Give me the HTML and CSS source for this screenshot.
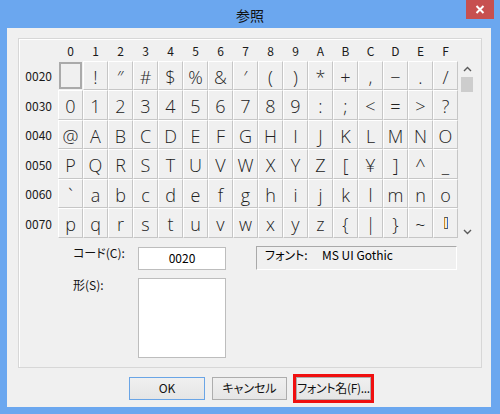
FILE: index.html
```html
<!DOCTYPE html>
<html lang="ja">
<head>
<meta charset="utf-8">
<title>参照</title>
<link rel="stylesheet" href="styles.css">
</head>
<body>
<div class="window">
  <div class="titlebar">
    <div class="spacer"></div>
    <div class="title">参照</div>
    <div class="close">
      <svg width="10" height="9" viewBox="0 0 10 9"><path d="M1.5 1 L8.5 8 M8.5 1 L1.5 8" stroke="#fff" stroke-width="2" fill="none"/></svg>
    </div>
  </div>
  <div class="client">
    <div class="group">
      <div class="charmap">
        <div class="corner"></div>
        <div class="colhead">0</div><div class="colhead">1</div><div class="colhead">2</div><div class="colhead">3</div>
        <div class="colhead">4</div><div class="colhead">5</div><div class="colhead">6</div><div class="colhead">7</div>
        <div class="colhead">8</div><div class="colhead">9</div><div class="colhead">A</div><div class="colhead">B</div>
        <div class="colhead">C</div><div class="colhead">D</div><div class="colhead">E</div><div class="colhead">F</div>
        <div class="corner"></div>

        <div class="rowhead">0020</div>
        <div class="cell sel"></div><div class="cell">!</div><div class="cell">″</div><div class="cell">#</div>
        <div class="cell">$</div><div class="cell">%</div><div class="cell">&amp;</div><div class="cell">′</div>
        <div class="cell">(</div><div class="cell">)</div><div class="cell">*</div><div class="cell">+</div>
        <div class="cell">,</div><div class="cell">−</div><div class="cell">.</div><div class="cell">/</div>
        <div class="scrollbar">
          <div class="sbtn"><svg width="9" height="6" viewBox="0 0 9 6"><path d="M1 5 L4.5 1.5 L8 5" stroke="#5a5a5a" stroke-width="1.4" fill="none"/></svg></div>
          <div class="thumb"></div>
          <div class="sbtn down"><svg width="9" height="6" viewBox="0 0 9 6"><path d="M1 1 L4.5 4.5 L8 1" stroke="#5a5a5a" stroke-width="1.4" fill="none"/></svg></div>
        </div>

        <div class="rowhead">0030</div>
        <div class="cell">0</div><div class="cell">1</div><div class="cell">2</div><div class="cell">3</div>
        <div class="cell">4</div><div class="cell">5</div><div class="cell">6</div><div class="cell">7</div>
        <div class="cell">8</div><div class="cell">9</div><div class="cell">:</div><div class="cell">;</div>
        <div class="cell">&lt;</div><div class="cell">=</div><div class="cell">&gt;</div><div class="cell">?</div>

        <div class="rowhead">0040</div>
        <div class="cell">@</div><div class="cell">A</div><div class="cell">B</div><div class="cell">C</div>
        <div class="cell">D</div><div class="cell">E</div><div class="cell">F</div><div class="cell">G</div>
        <div class="cell">H</div><div class="cell">I</div><div class="cell">J</div><div class="cell">K</div>
        <div class="cell">L</div><div class="cell">M</div><div class="cell">N</div><div class="cell">O</div>

        <div class="rowhead">0050</div>
        <div class="cell">P</div><div class="cell">Q</div><div class="cell">R</div><div class="cell">S</div>
        <div class="cell">T</div><div class="cell">U</div><div class="cell">V</div><div class="cell">W</div>
        <div class="cell">X</div><div class="cell">Y</div><div class="cell">Z</div><div class="cell">[</div>
        <div class="cell">¥</div><div class="cell">]</div><div class="cell">^</div><div class="cell">_</div>

        <div class="rowhead">0060</div>
        <div class="cell">`</div><div class="cell">a</div><div class="cell">b</div><div class="cell">c</div>
        <div class="cell">d</div><div class="cell">e</div><div class="cell">f</div><div class="cell">g</div>
        <div class="cell">h</div><div class="cell">i</div><div class="cell">j</div><div class="cell">k</div>
        <div class="cell">l</div><div class="cell">m</div><div class="cell">n</div><div class="cell">o</div>

        <div class="rowhead">0070</div>
        <div class="cell">p</div><div class="cell">q</div><div class="cell">r</div><div class="cell">s</div>
        <div class="cell">t</div><div class="cell">u</div><div class="cell">v</div><div class="cell">w</div>
        <div class="cell">x</div><div class="cell">y</div><div class="cell">z</div><div class="cell">{</div>
        <div class="cell">|</div><div class="cell">}</div><div class="cell">~</div><div class="cell"><span class="nochar"></span></div>
      </div>

      <div class="info">
        <div class="label">コード(C):</div>
        <div class="codebox">0020</div>
        <div class="gap"></div>
        <div class="fontbox"><span class="fontlabel">フォント:</span><span>MS UI Gothic</span></div>
        <div class="label">形(S):</div>
        <div class="shapebox"></div>
      </div>
    </div>

    <div class="buttons">
      <div class="btn ok">OK</div>
      <div class="btn cancel">キャンセル</div>
      <div class="btn fontname">フォント名(F)...</div>
    </div>
  </div>
</div>
</body>
</html>
```

FILE: styles.css
```css
html, body {
  margin: 0;
  padding: 0;
}
body {
  width: 500px;
  height: 414px;
  overflow: hidden;
  background: #6ba7ef;
  font-family: "Noto Sans CJK JP", "Noto Sans", sans-serif;
  font-size: 12px;
  font-feature-settings: "palt";
  color: #000;
}
.window {
  display: flex;
  flex-direction: column;
  height: 414px;
}
.titlebar {
  height: 28px;
  display: grid;
  grid-template-columns: 1fr auto 1fr;
}
.title {
  align-self: center;
  font-size: 14px;
  line-height: 20px;
  padding-top: 1px;
  color: #111;
  font-feature-settings: normal;
}
.close {
  justify-self: end;
  align-self: start;
  width: 28px;
  height: 19px;
  margin-right: 6px;
  background: #c75050;
  display: flex;
  align-items: center;
  justify-content: center;
}
.client {
  flex: 1;
  margin: 0 9px 7px 7px;
  background: #f0f0f0;
  display: flex;
  flex-direction: column;
  padding-top: 10px;
  box-sizing: border-box;
}
.group {
  margin-left: 11px;
  width: 464px;
  height: 330px;
  box-sizing: border-box;
  border: 1px solid #d7d7d7;
  box-shadow: inset 1px 1px 0 #fff;
}
.charmap {
  display: grid;
  grid-template-columns: 39px repeat(16, 25px) 18px;
  grid-template-rows: 22px 29px 30px 29px 30px 29px 30px;
}
.colhead {
  text-align: center;
  line-height: 22px;
  padding-top: 1px;
  color: #1a1a1a;
}
.rowhead {
  grid-column: 1;
  display: flex;
  align-items: center;
  justify-content: flex-end;
  padding-right: 6px;
  color: #1a1a1a;
}
.cell {
  box-sizing: border-box;
  border: 1px solid;
  border-color: #fff #c6c6c6 #c6c6c6 #fff;
  display: flex;
  align-items: center;
  justify-content: center;
  padding-top: 2px;
  font-family: "Open Sans", "Liberation Sans", sans-serif;
  font-weight: 300;
  font-size: 18px;
  color: #222;
}
.cell.sel {
  border-color: #f0f0f0;
  box-shadow: inset 0 0 0 2px #aaaaaa;
}
.nochar {
  display: block;
  width: 2px;
  height: 10px;
  border-left: 1px solid #d08a2a;
  border-right: 1px solid #3a6cc8;
  border-top: 1px solid #555;
  border-bottom: 1px solid #555;
  background: #f5ecd0;
  margin-bottom: 2px;
}
.scrollbar {
  grid-column: 18;
  grid-row: 2 / 8;
  display: flex;
  flex-direction: column;
}
.sbtn {
  height: 16px;
  display: flex;
  align-items: center;
  justify-content: center;
}
.sbtn.down {
  margin-top: auto;
  padding-top: 3px;
  box-sizing: border-box;
}
.thumb {
  height: 15px;
  margin: 0 3px 0 3px;
  background: #cdcdcd;
}
.info {
  display: grid;
  grid-template-columns: 65px 88px 30px 201px;
  grid-template-rows: 24px 80px;
  row-gap: 8px;
  margin: 8px 0 0 54px;
}
.label {
  line-height: 14px;
  color: #111;
}
.codebox {
  margin-top: 1px;
  height: 23px;
  box-sizing: border-box;
  border: 1px solid #bdbdbd;
  background: #fff;
  text-align: center;
  line-height: 20px;
}
.fontbox {
  box-sizing: border-box;
  height: 24px;
  border: 1px solid;
  border-color: #a9a9a9 #fff #fff #a9a9a9;
  padding: 1px 0 0 8px;
  line-height: 14px;
  display: flex;
}
.fontlabel {
  width: 57px;
}
.shapebox {
  grid-column: 2;
  height: 80px;
  box-sizing: border-box;
  border: 1px solid #bdbdbd;
  background: #fff;
}
.buttons {
  display: flex;
  margin-top: 9px;
  padding-left: 122px;
}
.btn {
  height: 23px;
  box-sizing: border-box;
  border: 1px solid #adadad;
  background: linear-gradient(#f0f0f0, #e5e5e5);
  text-align: center;
  line-height: 20px;
  white-space: nowrap;
  color: #111;
}
.ok {
  width: 76px;
  border-color: #6aa5e6;
}
.cancel {
  width: 75px;
  margin-left: 7px;
}
.fontname {
  width: 75px;
  margin-left: 9px;
  letter-spacing: -0.3px;
  outline: 3px solid #f01010;
  outline-offset: 0;
}
```
